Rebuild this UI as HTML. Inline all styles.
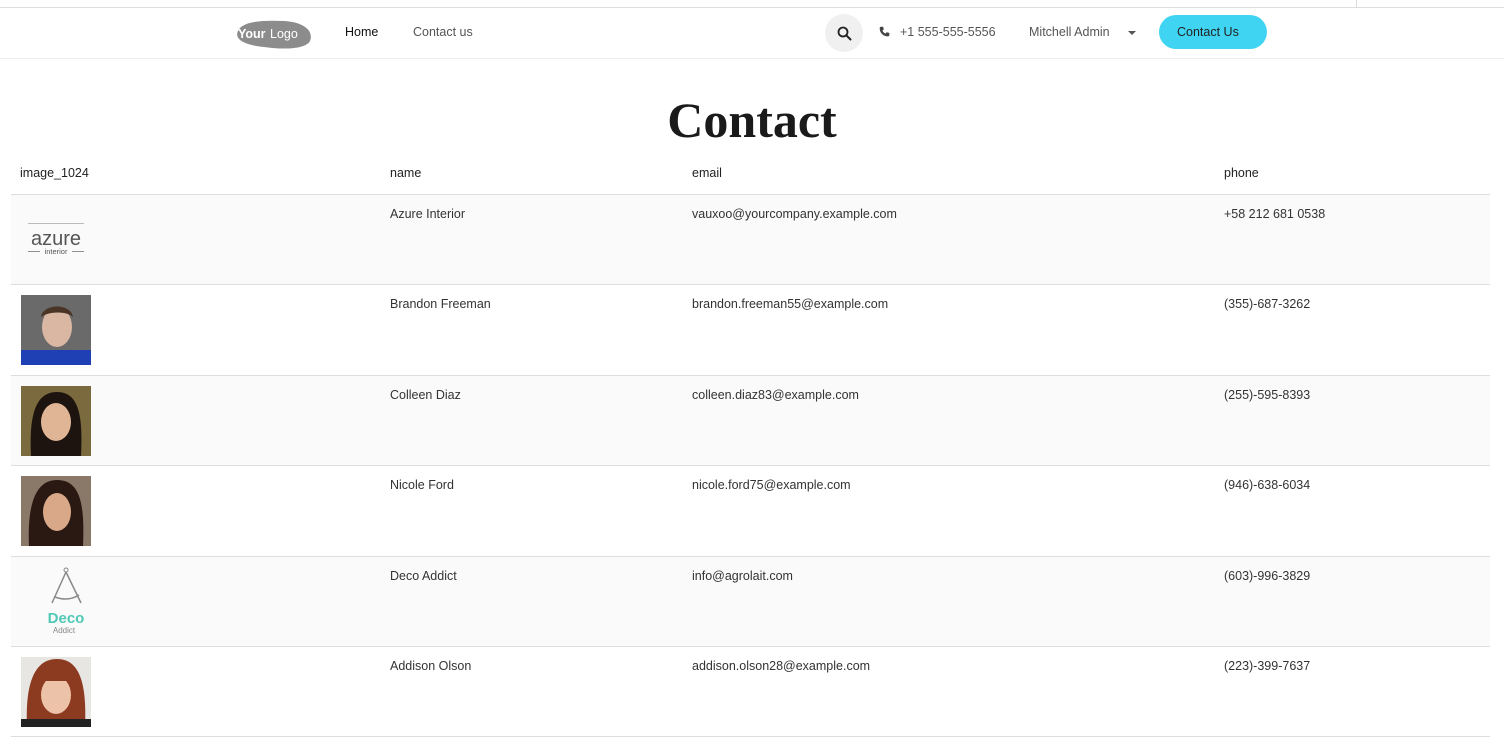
<!DOCTYPE html>
<html><head><meta charset="utf-8">
<style>
*{box-sizing:border-box;margin:0;padding:0}
body{width:1504px;height:742px;overflow:hidden;background:#fff;font-family:"Liberation Sans",sans-serif;color:#222;position:relative}
.topline{position:absolute;left:0;top:7px;width:1504px;height:1px;background:#ddd}
.vline{position:absolute;left:1356px;top:0;width:1px;height:8px;background:#ddd}
.nav{position:absolute;left:0;top:8px;width:1504px;height:51px;border-bottom:1px solid #eee}
.t{position:absolute;font-size:12.5px;white-space:nowrap}
h1{position:absolute;left:0;width:1504px;top:91px;text-align:center;font-family:"Liberation Serif",serif;font-weight:bold;font-size:50px;color:#1a1a1a}
.row{position:absolute;left:11px;width:1479px;border-bottom:1px solid #ddd}
.row.s{background:#fafafa}
.c{position:absolute;font-size:12.5px;color:#333;top:12px}
.img{position:absolute;left:10px;top:10px;width:70px;height:70px}
</style></head><body>
<div class="topline"></div><div class="vline"></div>
<div class="nav">
 <svg style="position:absolute;left:234px;top:9px" width="78" height="32" viewBox="0 0 78 32"><path d="M4 14 C8 4 30 3 50 4 C70 5 80 14 76 24 C72 32 50 33 30 30 C10 28 0 22 4 14Z" fill="#8c8c8c"/><text x="4" y="21" font-family="Liberation Sans" font-weight="bold" font-size="12.5" fill="#fff">Your</text><text x="36" y="21" font-family="Liberation Sans" font-size="12.5" fill="#fff">Logo</text></svg>
 <div class="t" style="left:345px;top:17px;color:#111">Home</div>
 <div class="t" style="left:413px;top:17px;color:#555">Contact us</div>
 <div style="position:absolute;left:825px;top:6px;width:38px;height:38px;border-radius:50%;background:#f0f0f0"></div>
 <svg style="position:absolute;left:837px;top:18px" width="15" height="15" viewBox="0 0 15 15"><circle cx="6" cy="6" r="4.5" fill="none" stroke="#222" stroke-width="1.8"/><path d="M9.3 9.3 L13.5 13.5" stroke="#222" stroke-width="2" stroke-linecap="round"/></svg>
 <svg style="position:absolute;left:879px;top:18px" width="11" height="11" viewBox="0 0 16 16"><path d="M3 1 L6 1 L7 5 L5 6.5 C6 9 7 10 9.5 11 L11 9 L15 10 L15 13 C15 14 14 15 13 15 C6 15 1 10 1 3 C1 2 2 1 3 1Z" fill="#444"/></svg>
 <div class="t" style="left:900px;top:17px;color:#555">+1 555-555-5556</div>
 <div class="t" style="left:1029px;top:17px;color:#555">Mitchell Admin</div>
 <div style="position:absolute;left:1128px;top:23px;border-left:4px solid transparent;border-right:4px solid transparent;border-top:4px solid #555"></div>
 <div style="position:absolute;left:1159px;top:7px;width:108px;height:34px;border-radius:17px;background:#3fd4f2"></div>
 <div class="t" style="left:1177px;top:17px;color:#222">Contact Us</div>
</div>
<h1>Contact</h1>
<div class="t" style="left:20px;top:166px;color:#222">image_1024</div>
<div class="t" style="left:390px;top:166px;color:#222">name</div>
<div class="t" style="left:692px;top:166px;color:#222">email</div>
<div class="t" style="left:1224px;top:166px;color:#222">phone</div>
<div style="position:absolute;left:11px;top:194px;width:1479px;height:1px;background:#ddd"></div>

<div class="row s" style="top:195px;height:90px">
 <svg class="img" viewBox="0 0 70 70"><rect x="7" y="18" width="56" height="1" fill="#bbb"/><text x="35" y="40" text-anchor="middle" font-family="Liberation Sans" font-size="20" fill="#555">azure</text><rect x="7" y="46" width="12" height="0.8" fill="#777"/><rect x="51" y="46" width="12" height="0.8" fill="#777"/><text x="35" y="49" text-anchor="middle" font-family="Liberation Sans" font-size="7.5" fill="#555">interior</text></svg>
 <div class="c" style="left:379px">Azure Interior</div><div class="c" style="left:681px">vauxoo@yourcompany.example.com</div><div class="c" style="left:1213px">+58 212 681 0538</div>
</div>
<div class="row" style="top:285px;height:91px">
 <svg class="img" viewBox="0 0 70 70"><rect width="70" height="70" fill="#6b6a6a"/><rect x="0" y="55" width="70" height="15" fill="#1f3fb5"/><ellipse cx="36" cy="32" rx="15" ry="20" fill="#d9b7a2"/><path d="M20 22 C22 8 50 8 52 22 C46 16 28 16 20 22Z" fill="#4a3426"/></svg>
 <div class="c" style="left:379px">Brandon Freeman</div><div class="c" style="left:681px">brandon.freeman55@example.com</div><div class="c" style="left:1213px">(355)-687-3262</div>
</div>
<div class="row s" style="top:376px;height:90px">
 <svg class="img" viewBox="0 0 70 70"><rect width="70" height="70" fill="#7a6a3e"/><path d="M10 70 C8 30 14 6 36 6 C58 6 62 30 60 70Z" fill="#1e140f"/><ellipse cx="35" cy="36" rx="15" ry="19" fill="#e0b596"/></svg>
 <div class="c" style="left:379px">Colleen Diaz</div><div class="c" style="left:681px">colleen.diaz83@example.com</div><div class="c" style="left:1213px">(255)-595-8393</div>
</div>
<div class="row" style="top:466px;height:91px">
 <svg class="img" viewBox="0 0 70 70"><rect width="70" height="70" fill="#8a7868"/><path d="M8 70 C6 25 16 4 36 4 C58 4 64 25 62 70Z" fill="#2a1812"/><ellipse cx="36" cy="36" rx="14" ry="19" fill="#d8a888"/></svg>
 <div class="c" style="left:379px">Nicole Ford</div><div class="c" style="left:681px">nicole.ford75@example.com</div><div class="c" style="left:1213px">(946)-638-6034</div>
</div>
<div class="row s" style="top:557px;height:90px">
 <svg class="img" viewBox="0 0 70 70"><circle cx="45" cy="3" r="2" fill="none" stroke="#888" stroke-width="1"/><path d="M45 5 L31 36 M45 5 L60 36 M34 30 C42 33 50 33 58 28" stroke="#888" stroke-width="1.5" fill="none"/><text x="45" y="56" text-anchor="middle" font-family="Liberation Sans" font-weight="bold" font-size="15" fill="#4fc9b6">Deco</text><text x="43" y="66" text-anchor="middle" font-family="Liberation Sans" font-size="8" fill="#888">Addict</text></svg>
 <div class="c" style="left:379px">Deco Addict</div><div class="c" style="left:681px">info@agrolait.com</div><div class="c" style="left:1213px">(603)-996-3829</div>
</div>
<div class="row" style="top:647px;height:90px">
 <svg class="img" viewBox="0 0 70 70"><rect width="70" height="70" fill="#e8e6e2"/><path d="M6 70 C4 25 14 2 36 2 C58 2 66 25 64 70Z" fill="#8c3a20"/><ellipse cx="35" cy="38" rx="15" ry="19" fill="#ecc2a8"/><path d="M20 24 C24 12 48 12 52 24Z" fill="#8c3a20"/><rect x="0" y="62" width="70" height="8" fill="#222"/></svg>
 <div class="c" style="left:379px">Addison Olson</div><div class="c" style="left:681px">addison.olson28@example.com</div><div class="c" style="left:1213px">(223)-399-7637</div>
</div>
</body></html>
